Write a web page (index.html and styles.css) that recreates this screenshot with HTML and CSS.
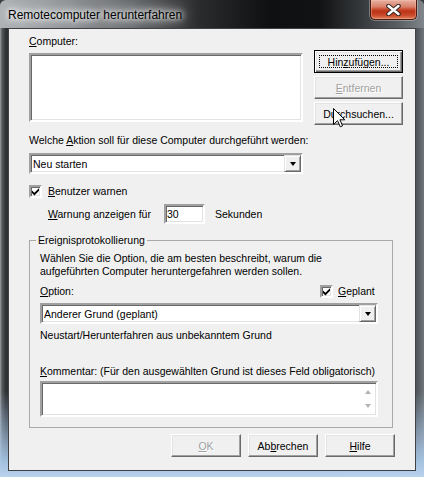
FILE: index.html
```html
<!DOCTYPE html>
<html>
<head>
<meta charset="utf-8">
<link rel="stylesheet" href="styles.css">
</head>
<body>
<div class="window">
  <div class="titlebar">
    <span class="title">Remotecomputer herunterfahren</span>
    <div class="close">
      <svg width="15" height="12" viewBox="0 0 15 12">
        <path d="M2.5 2 L12.5 10 M12.5 2 L2.5 10" stroke="#3d2a26" stroke-width="4.6" stroke-linecap="round" fill="none"/>
        <path d="M2.5 2 L12.5 10 M12.5 2 L2.5 10" stroke="#ffffff" stroke-width="2.4" stroke-linecap="round" fill="none"/>
      </svg>
    </div>
  </div>
  <div class="client">
    <div class="top">
      <div class="col-left">
        <div class="label"><u>C</u>omputer:</div>
        <div class="listbox sunken"></div>
      </div>
      <div class="col-right">
        <div class="btn default"><span class="focus"></span>Hin<u>z</u>ufügen...</div>
        <div class="btn disabled"><u>E</u>ntfernen</div>
        <div class="btn">Du<u>r</u>chsuchen...</div>
      </div>
    </div>
    <div class="label gap-action">Welche <u>A</u>ktion soll für diese Computer durchgeführt werden:</div>
    <div class="combo combo-action sunken">
      <div class="combo-text">Neu starten</div>
      <div class="combo-btn"><span class="tri"></span></div>
    </div>
    <div class="check-row">
      <div class="checkbox sunken">
        <svg width="9" height="9" viewBox="0 0 9 9"><path d="M1 3.4 L3.4 5.8 L8 1.2 L8 3.8 L3.4 8.4 L1 6 Z" fill="#000"/></svg>
      </div>
      <div class="label"><u>B</u>enutzer warnen</div>
    </div>
    <div class="warn-row">
      <div class="label warn-label"><u>W</u>arnung anzeigen für</div>
      <div class="textbox sunken">30</div>
      <div class="label sek">Sekunden</div>
    </div>
    <fieldset class="group">
      <legend class="legend">Ereignisprotokollierung</legend>
      <div class="group-body">
        <div class="para">Wählen Sie die Option, die am besten beschreibt, warum die<br>aufgeführten Computer heruntergefahren werden sollen.</div>
        <div class="option-row">
          <div class="label option-label"><u>O</u>ption:</div>
          <div class="checkbox sunken">
            <svg width="9" height="9" viewBox="0 0 9 9"><path d="M1 3.4 L3.4 5.8 L8 1.2 L8 3.8 L3.4 8.4 L1 6 Z" fill="#000"/></svg>
          </div>
          <div class="label geplant"><u>G</u>eplant</div>
        </div>
        <div class="combo combo-reason sunken">
          <div class="combo-text">Anderer Grund (geplant)</div>
          <div class="combo-btn"><span class="tri"></span></div>
        </div>
        <div class="label desc">Neustart/Herunterfahren aus unbekanntem Grund</div>
        <div class="label komm"><u>K</u>ommentar: (Für den ausgewählten Grund ist dieses Feld obligatorisch)</div>
        <div class="textarea sunken">
          <div class="ta-text"></div>
          <div class="vscroll">
            <span class="tri-up"></span>
            <span class="tri-down"></span>
          </div>
        </div>
      </div>
    </fieldset>
    <div class="btn-row">
      <div class="btn small disabled"><u>O</u>K</div>
      <div class="btn small">Ab<u>b</u>rechen</div>
      <div class="btn small"><u>H</u>ilfe</div>
    </div>
  </div>
  <svg class="cursor" width="13" height="20" viewBox="0 0 13 20">
    <path d="M0.5 0.5 L0.5 16.5 L4.5 12.7 L7.3 18.8 L9.6 17.8 L6.9 11.8 L11.8 11.8 Z" fill="#ffffff" stroke="#000000" stroke-width="1" stroke-linejoin="miter"/>
  </svg>
</div>
</body>
</html>
```

FILE: styles.css
```css
* { box-sizing: border-box; }

body {
  margin: 0;
  background: #3b3e41;
  font-family: "Liberation Sans", Arial, sans-serif;
  font-size: 10.5px;
  color: #000;
}

.window {
  position: relative;
  width: 424px;
  height: 477px;
  display: flex;
  flex-direction: column;
  overflow: hidden;
  border-radius: 6px 6px 0 0;
  background:
    linear-gradient(to bottom, rgba(180,210,240,0) 0, rgba(180,210,240,0) 82%, rgba(170,200,232,0.95) 97%, #b9d2ec 100%),
    linear-gradient(to right, #9ba0a4 0, #55595c 2px, #2d3033 6px, #24272a 50%, #50555a 417px, #6f757a 424px);
}

.titlebar {
  flex: none;
  height: 28px;
  display: flex;
  align-items: flex-start;
  background: linear-gradient(to right, #aeb2b5 0, #9a9ea1 50px, #6b6e71 130px, #2a2b2c 200px, #0f1011 270px, #111213 320px, #35383b 360px, #5c6165 400px, #80868b 424px);
}

.title {
  padding: 8px 0 0 8px;
  font-size: 12px;
  line-height: 15px;
  white-space: nowrap;
  color: #000;
  text-shadow: 0 0 5px #fff, 0 0 9px #fff, 0 0 14px rgba(255,255,255,0.9), 0 0 18px rgba(255,255,255,0.6);
}

.close {
  margin-left: auto;
  margin-right: 7px;
  width: 47px;
  height: 20px;
  border: 1px solid #4b1b10;
  border-top: none;
  border-radius: 0 0 5px 5px;
  background: linear-gradient(to bottom, #e7b1a3 0, #d9826b 35%, #c84a2c 50%, #bd3317 60%, #c84a2b 80%, #e2805f 100%);
  box-shadow: 0 0 0 1px rgba(255,255,255,0.3), inset 0 0 0 1px rgba(255,200,180,0.35);
  display: flex;
  align-items: center;
  justify-content: center;
}

.client {
  flex: none;
  margin-left: 8px;
  width: 408px;
  height: 443px;
  background: #f0f0f0;
  border: 1px solid #3e4246;
  padding: 0 20px;
}

.label {
  line-height: 13px;
  height: 13px;
  white-space: nowrap;
}

u { text-decoration: underline; text-underline-offset: 1px; }

.sunken {
  background: #fff;
  border: 2px solid;
  border-color: #a0a0a0 #fff #fff #a0a0a0;
  box-shadow: inset 1px 1px 0 #696969, inset -1px -1px 0 #e3e3e3;
}

.top {
  display: flex;
  align-items: flex-start;
}

.col-left {
  flex: none;
  width: 274px;
  margin-top: 6px;
}

.listbox {
  margin-top: 5px;
  height: 69px;
  width: 274px;
}

.col-right {
  flex: none;
  margin-left: 11px;
  margin-top: 21px;
  display: flex;
  flex-direction: column;
  gap: 3px;
}

.btn {
  position: relative;
  flex: none;
  width: 89px;
  height: 23px;
  display: flex;
  align-items: center;
  justify-content: center;
  background: #f0f0f0;
  border: 1px solid;
  border-color: #fff #696969 #696969 #fff;
  box-shadow: inset -1px -1px 0 #a0a0a0, inset 1px 1px 0 #e3e3e3;
  line-height: 13px;
  white-space: nowrap;
  padding-top: 1px;
}

.btn.default {
  border: 1px solid #000;
  box-shadow: inset 1px 1px 0 #fff, inset -1px -1px 0 #696969, inset -2px -2px 0 #a0a0a0, inset 2px 2px 0 #e3e3e3;
}

.focus {
  position: absolute;
  left: 4px;
  top: 4px;
  right: 4px;
  bottom: 4px;
  border: 1px dotted #000;
}

.btn.disabled {
  color: #a0a0a0;
  text-shadow: 1px 1px 0 #fff;
}

.btn.small {
  width: 70px;
}

.gap-action {
  margin-top: 9px;
}

.combo {
  display: flex;
  height: 21px;
}

.combo-action {
  margin-top: 6px;
  width: 274px;
}

.combo-text {
  flex: 1;
  padding: 3px 0 0 2px;
  line-height: 13px;
  white-space: nowrap;
}

.combo-btn {
  flex: none;
  width: 17px;
  height: 17px;
  background: #f0f0f0;
  border: 1px solid;
  border-color: #e3e3e3 #696969 #696969 #e3e3e3;
  box-shadow: inset 1px 1px 0 #fff, inset -1px -1px 0 #a0a0a0;
  display: flex;
  align-items: center;
  justify-content: center;
}

.tri {
  width: 0;
  height: 0;
  border-left: 3.5px solid transparent;
  border-right: 3.5px solid transparent;
  border-top: 4px solid #000;
  margin-top: 1px;
}

.check-row {
  margin-top: 11px;
  display: flex;
  align-items: center;
  gap: 6px;
  height: 13px;
}

.checkbox {
  flex: none;
  width: 13px;
  height: 13px;
  display: flex;
  align-items: center;
  justify-content: center;
}

.checkbox svg { display: block; }

.warn-row {
  margin-top: 6px;
  margin-left: 19px;
  height: 20px;
  display: flex;
  align-items: center;
}

.warn-label {
  width: 116px;
}

.textbox {
  flex: none;
  width: 41px;
  height: 20px;
  padding: 2px 0 0 1px;
  line-height: 13px;
}

.sek {
  margin-left: 10px;
}

.group {
  margin: 10px 0 0 0;
  padding: 0;
  width: 364px;
  border: 1px solid #a9a9a9;
  min-width: 0;
}

.legend {
  margin-left: 6px;
  padding: 0 2px;
  line-height: 13px;
  font-size: 10.5px;
}

.group-body {
  padding: 0 14px 10px 10px;
}

.para {
  margin-top: 5px;
  line-height: 13px;
  white-space: nowrap;
}

.option-row {
  margin-top: 7px;
  display: flex;
  align-items: center;
  height: 13px;
}

.option-label {
  width: 280px;
}

.geplant {
  margin-left: 5px;
}

.combo-reason {
  margin-top: 5px;
  width: 338px;
}

.desc {
  margin-top: 5px;
}

.komm {
  margin-top: 23px;
}

.textarea {
  margin-top: 3px;
  width: 338px;
  height: 36px;
  display: flex;
}

.ta-text { flex: 1; }

.vscroll {
  flex: none;
  width: 17px;
  display: flex;
  flex-direction: column;
  align-items: center;
  justify-content: space-between;
  padding: 7px 0 7px;
}

.tri-up {
  width: 0;
  height: 0;
  border-left: 3.5px solid transparent;
  border-right: 3.5px solid transparent;
  border-bottom: 4px solid #b4b4b4;
}

.tri-down {
  width: 0;
  height: 0;
  border-left: 3.5px solid transparent;
  border-right: 3.5px solid transparent;
  border-top: 4px solid #b4b4b4;
}

.btn-row {
  margin-top: 6px;
  display: flex;
  justify-content: flex-end;
  gap: 7px;
}

.cursor {
  position: absolute;
  left: 333px;
  top: 108px;
}
```
